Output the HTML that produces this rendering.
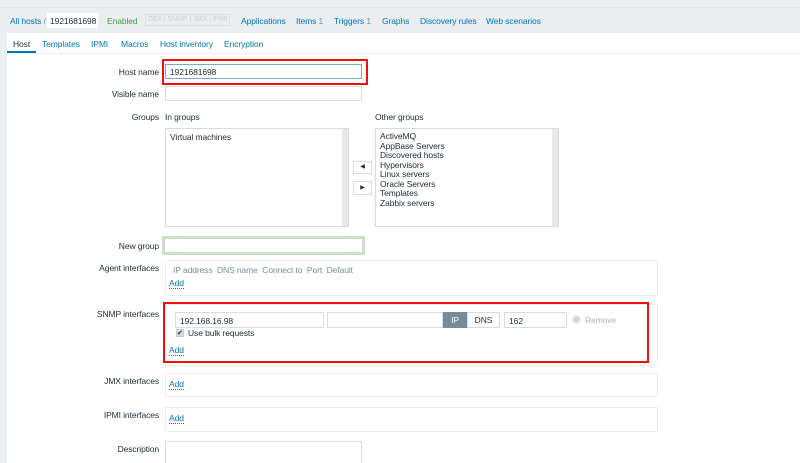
<!DOCTYPE html>
<html><head><meta charset="utf-8"><style>
*{box-sizing:border-box;margin:0;padding:0}
html,body{width:800px;height:463px;overflow:hidden}
body{background:#ebeef0;font-family:"Liberation Sans",Arial,sans-serif;font-size:8.5px;color:#1f2c33;position:relative;letter-spacing:-0.1px}
.a{position:absolute;white-space:nowrap}
.lnk{color:#0275b8}
.lbl{position:absolute;right:641px;white-space:nowrap;color:#1f2c33}
.inp{position:absolute;background:#fff;border:1px solid #d9dcde}
.box{position:absolute;border:1px solid #ebeef0;background:#fff}
.red{position:absolute;border:2.5px solid #ee1111}
.add{position:absolute;color:#0275b8;border-bottom:1px dotted #0275b8;line-height:9px}
</style></head><body>
<div class="a" style="left:0;top:7px;width:800px;height:1px;background:#e0e4e6"></div>
<div class="a" style="left:10px;top:16px" ><span class="lnk">All hosts</span> <span style="color:#768d99">/</span></div>
<div class="a" style="left:47px;top:13px;width:51px;height:15px;background:#fff;padding:3px 0 0 3px">1921681698</div>
<div class="a" style="left:107px;top:16px;color:#429e47">Enabled</div>
<div class="a" style="left:145px;top:14px;height:12px;border:1px solid #dde0e2;color:#ccd0d3;font-size:7px;padding:1px 2px;letter-spacing:0">ZBX | SNMP | JMX | IPMI</div>
<div class="a lnk" style="left:241px;top:16px">Applications</div>
<div class="a lnk" style="left:296px;top:16px">Items <span style="color:#768d99">1</span></div>
<div class="a lnk" style="left:334px;top:16px">Triggers <span style="color:#768d99">1</span></div>
<div class="a lnk" style="left:382px;top:16px">Graphs</div>
<div class="a lnk" style="left:420px;top:16px">Discovery rules</div>
<div class="a lnk" style="left:486px;top:16px">Web scenarios</div>
<div class="a" style="left:7px;top:33px;width:793px;height:430px;background:#fff"></div>
<div class="a" style="left:7px;top:53px;width:793px;height:1px;background:#ebeef0"></div>
<div class="a" style="left:13px;top:39px">Host</div>
<div class="a" style="left:7px;top:51px;width:29px;height:2px;background:#0275b8"></div>
<div class="a lnk" style="left:42px;top:39px">Templates</div>
<div class="a lnk" style="left:91px;top:39px">IPMI</div>
<div class="a lnk" style="left:121px;top:39px">Macros</div>
<div class="a lnk" style="left:160px;top:39px">Host inventory</div>
<div class="a lnk" style="left:224px;top:39px">Encryption</div>

<div class="lbl" style="top:67px">Host name</div>
<div class="inp" style="left:165px;top:64px;width:197px;height:15px;border-color:#7fa9c6;padding:2px 4px">1921681698</div>
<div class="red" style="left:162px;top:59px;width:206px;height:26px"></div>
<div class="lbl" style="top:89px">Visible name</div>
<div class="inp" style="left:165px;top:86px;width:197px;height:15px"></div>

<div class="lbl" style="top:112px">Groups</div>
<div class="a" style="left:165px;top:112px">In groups</div>
<div class="inp" style="left:165px;top:128px;width:184px;height:99px;padding:3px 4px">Virtual machines</div>
<div class="a" style="left:342px;top:129px;width:6px;height:97px;background:#e6e8ea"></div>
<div class="a" style="left:353px;top:161px;width:19px;height:13px;border:1px solid #d9dcde;font-size:6px;text-align:center;line-height:11px">◀</div>
<div class="a" style="left:353px;top:181px;width:19px;height:14px;border:1px solid #d9dcde;font-size:6px;text-align:center;line-height:12px">▶</div>
<div class="a" style="left:375px;top:112px">Other groups</div>
<div class="inp" style="left:375px;top:128px;width:184px;height:99px;padding:3px 4px;line-height:9.5px">ActiveMQ<br>AppBase Servers<br>Discovered hosts<br>Hypervisors<br>Linux servers<br>Oracle Servers<br>Templates<br>Zabbix servers</div>
<div class="a" style="left:552px;top:129px;width:6px;height:97px;background:#e6e8ea"></div>

<div class="lbl" style="top:241px">New group</div>
<div class="a" style="left:162px;top:236px;width:203px;height:19px;border:3px solid #c9e2c6;background:#fff"></div>

<div class="lbl" style="top:263px">Agent interfaces</div>
<div class="box" style="left:165px;top:260px;width:493px;height:36px"></div>
<div class="a" style="left:173px;top:265px;color:#768d99">IP address&nbsp; DNS name&nbsp; Connect to&nbsp; Port&nbsp; Default</div>
<div class="add" style="left:169px;top:279px">Add</div>

<div class="lbl" style="top:309px">SNMP interfaces</div>
<div class="box" style="left:165px;top:304px;width:493px;height:62px"></div>
<div class="inp" style="left:175px;top:312px;width:149px;height:16px;padding:3px 4px">192.168.16.98</div>
<div class="inp" style="left:327px;top:312px;width:116px;height:16px"></div>
<div class="a" style="left:443px;top:312px;width:24px;height:16px;background:#768d99;color:#fff;text-align:center;line-height:16px">IP</div>
<div class="inp" style="left:467px;top:312px;width:33px;height:16px;text-align:center;line-height:14px">DNS</div>
<div class="inp" style="left:504px;top:312px;width:63px;height:16px;padding:3px 4px">162</div>
<div class="a" style="left:572px;top:315px;width:9px;height:9px;border-radius:50%;background:#d0d3d5;border:2px solid #e4e6e8"></div>
<div class="a" style="left:585px;top:315px;color:#a8b3ba">Remove</div>
<div class="a" style="left:176px;top:329px;width:8px;height:8px;background:#d9dcde;border:1px solid #ccc;font-size:7px;line-height:7px">✔</div>
<div class="a" style="left:188px;top:328px">Use bulk requests</div>
<div class="add" style="left:169px;top:346px">Add</div>
<div class="red" style="left:163px;top:302px;width:486px;height:61px"></div>

<div class="lbl" style="top:376px">JMX interfaces</div>
<div class="box" style="left:165px;top:373px;width:493px;height:24px"></div>
<div class="add" style="left:169px;top:380px">Add</div>
<div class="lbl" style="top:410px">IPMI interfaces</div>
<div class="box" style="left:165px;top:407px;width:493px;height:25px"></div>
<div class="add" style="left:169px;top:414px">Add</div>
<div class="lbl" style="top:444px">Description</div>
<div class="inp" style="left:165px;top:441px;width:197px;height:22px;border-bottom:none"></div>
</body></html>
